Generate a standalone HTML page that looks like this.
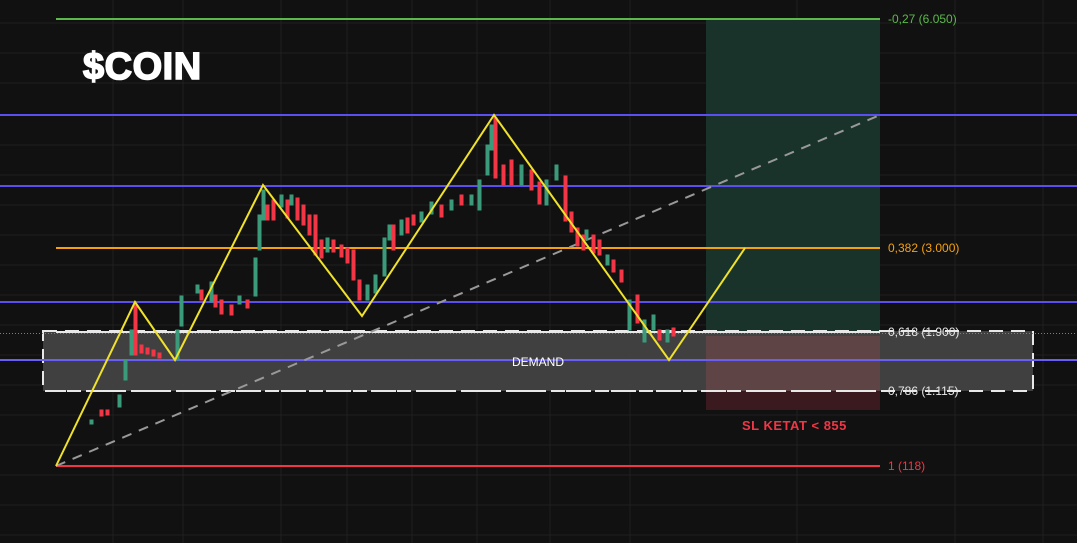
<!DOCTYPE html>
<html><head><meta charset="utf-8"><style>
html,body{margin:0;padding:0;background:#111111;}
svg{display:block}
text{font-family:"Liberation Sans",sans-serif;}
</style></head><body>
<svg width="1077" height="543" viewBox="0 0 1077 543" xmlns="http://www.w3.org/2000/svg">
<rect width="1077" height="543" fill="#111111"/>
<g stroke="#1f1f1f" stroke-width="1">
<line x1="0" y1="23" x2="1077" y2="23"/><line x1="0" y1="53" x2="1077" y2="53"/><line x1="0" y1="83" x2="1077" y2="83"/>
<line x1="0" y1="145" x2="1077" y2="145"/><line x1="0" y1="175" x2="1077" y2="175"/><line x1="0" y1="205" x2="1077" y2="205"/>
<line x1="0" y1="235" x2="1077" y2="235"/><line x1="0" y1="265" x2="1077" y2="265"/><line x1="0" y1="295" x2="1077" y2="295"/>
<line x1="0" y1="325" x2="1077" y2="325"/><line x1="0" y1="355" x2="1077" y2="355"/><line x1="0" y1="385" x2="1077" y2="385"/>
<line x1="0" y1="415" x2="1077" y2="415"/><line x1="0" y1="445" x2="1077" y2="445"/><line x1="0" y1="475" x2="1077" y2="475"/>
<line x1="0" y1="505" x2="1077" y2="505"/><line x1="0" y1="535" x2="1077" y2="535"/>
<line x1="113" y1="0" x2="113" y2="543"/><line x1="183" y1="0" x2="183" y2="543"/><line x1="281" y1="0" x2="281" y2="543"/>
<line x1="347" y1="0" x2="347" y2="543"/><line x1="412" y1="0" x2="412" y2="543"/><line x1="477" y1="0" x2="477" y2="543"/>
<line x1="550" y1="0" x2="550" y2="543"/><line x1="630" y1="0" x2="630" y2="543"/><line x1="797" y1="0" x2="797" y2="543"/>
<line x1="955" y1="0" x2="955" y2="543"/><line x1="1043" y1="0" x2="1043" y2="543"/>
</g>
<rect x="706" y="19" width="174" height="317" fill="#19332b"/>
<rect x="706" y="336" width="174" height="74" fill="#3a1a1e"/>
<rect x="43" y="331" width="990" height="60" fill="#444444" fill-opacity="0.92"/>
<rect x="706" y="336" width="174" height="55" fill="#5e4444"/>
<rect x="43" y="331" width="990" height="60" fill="none" stroke="#e8e8e8" stroke-width="2" stroke-dasharray="14,8"/>
<line x1="0" y1="333.5" x2="1077" y2="333.5" stroke="#4a9a80" stroke-width="1" stroke-dasharray="1,2"/>
<line x1="56" y1="19" x2="880" y2="19" stroke="#5cb84a" stroke-width="2"/>
<line x1="0" y1="115" x2="1077" y2="115" stroke="#5b4ff0" stroke-width="2"/>
<line x1="0" y1="186" x2="1077" y2="186" stroke="#5b4ff0" stroke-width="2"/>
<line x1="56" y1="248" x2="880" y2="248" stroke="#f5a10f" stroke-width="2"/>
<line x1="0" y1="302" x2="1077" y2="302" stroke="#5b4ff0" stroke-width="2"/>
<line x1="0" y1="360" x2="1077" y2="360" stroke="#6a5ff5" stroke-width="2"/>
<line x1="56" y1="466" x2="880" y2="466" stroke="#f23645" stroke-width="2"/>
<line x1="56" y1="332" x2="880" y2="332" stroke="#e8e8e8" stroke-width="2"/>
<line x1="56" y1="391" x2="880" y2="391" stroke="#e8e8e8" stroke-width="2" stroke-dasharray="10,5"/>
<line x1="56" y1="466" x2="880" y2="115" stroke="#999" stroke-width="2" stroke-dasharray="10,8"/>
<g stroke-width="1">
<g fill="#3a9a7a" stroke="#3a9a7a">
<rect x="90" y="420" width="3" height="4"/><rect x="118" y="395" width="3" height="12"/><rect x="124" y="360" width="3" height="20"/>
<rect x="130" y="330" width="3" height="25"/><rect x="176" y="330" width="3" height="30"/><rect x="180" y="296" width="3" height="30"/>
<rect x="196" y="285" width="3" height="8"/><rect x="210" y="282" width="3" height="20"/><rect x="238" y="296" width="3" height="8"/>
<rect x="254" y="258" width="3" height="38"/><rect x="258" y="215" width="3" height="35"/><rect x="262" y="190" width="3" height="30"/>
<rect x="280" y="195" width="3" height="12"/><rect x="290" y="195" width="3" height="10"/><rect x="326" y="238" width="3" height="14"/>
<rect x="366" y="285" width="3" height="15"/><rect x="374" y="275" width="3" height="18"/><rect x="383" y="238" width="3" height="38"/>
<rect x="388" y="225" width="3" height="15"/><rect x="400" y="220" width="3" height="15"/><rect x="420" y="212" width="3" height="10"/>
<rect x="430" y="202" width="3" height="12"/><rect x="450" y="200" width="3" height="10"/><rect x="470" y="195" width="3" height="10"/>
<rect x="478" y="180" width="3" height="30"/><rect x="486" y="145" width="3" height="30"/><rect x="490" y="125" width="3" height="25"/>
<rect x="520" y="165" width="3" height="20"/><rect x="545" y="180" width="3" height="25"/><rect x="555" y="165" width="3" height="15"/>
<rect x="585" y="230" width="3" height="10"/><rect x="606" y="255" width="3" height="10"/><rect x="628" y="300" width="3" height="30"/>
<rect x="643" y="320" width="3" height="22"/><rect x="652" y="315" width="3" height="15"/><rect x="666" y="330" width="3" height="12"/>
</g>
<g fill="#f23645" stroke="#f23645">
<rect x="100" y="410" width="3" height="6"/><rect x="106" y="410" width="3" height="5"/><rect x="134" y="305" width="3" height="50"/>
<rect x="140" y="345" width="3" height="8"/><rect x="146" y="348" width="3" height="6"/><rect x="152" y="350" width="3" height="6"/>
<rect x="158" y="353" width="3" height="5"/><rect x="200" y="290" width="3" height="10"/><rect x="214" y="295" width="3" height="12"/>
<rect x="220" y="300" width="3" height="14"/><rect x="230" y="305" width="3" height="10"/><rect x="246" y="300" width="3" height="8"/>
<rect x="266" y="205" width="3" height="15"/><rect x="272" y="200" width="3" height="20"/><rect x="286" y="200" width="3" height="18"/>
<rect x="296" y="198" width="3" height="22"/><rect x="302" y="205" width="3" height="20"/><rect x="308" y="215" width="3" height="20"/>
<rect x="314" y="215" width="3" height="40"/><rect x="320" y="240" width="3" height="18"/><rect x="332" y="240" width="3" height="12"/>
<rect x="340" y="245" width="3" height="12"/><rect x="346" y="248" width="3" height="15"/><rect x="352" y="250" width="3" height="30"/>
<rect x="358" y="280" width="3" height="20"/><rect x="392" y="225" width="3" height="25"/><rect x="406" y="218" width="3" height="15"/>
<rect x="412" y="215" width="3" height="10"/><rect x="440" y="205" width="3" height="12"/><rect x="460" y="195" width="3" height="10"/>
<rect x="494" y="118" width="3" height="60"/><rect x="502" y="165" width="3" height="20"/><rect x="510" y="160" width="3" height="25"/>
<rect x="530" y="170" width="3" height="20"/><rect x="538" y="182" width="3" height="22"/><rect x="564" y="176" width="3" height="45"/>
<rect x="570" y="212" width="3" height="20"/><rect x="576" y="228" width="3" height="18"/><rect x="582" y="235" width="3" height="15"/>
<rect x="592" y="235" width="3" height="18"/><rect x="598" y="240" width="3" height="15"/><rect x="612" y="260" width="3" height="12"/>
<rect x="620" y="270" width="3" height="12"/><rect x="636" y="295" width="3" height="28"/><rect x="658" y="330" width="3" height="10"/>
<rect x="672" y="328" width="3" height="8"/>
</g>
</g>
<polyline points="56,466 135,302 175,360 263,185 362,316 494,115 669,360 745,248" fill="none" stroke="#f0e12a" stroke-width="2"/>
<g font-size="12">
<text x="888" y="23" fill="#5cb84a">-0,27 (6.050)</text>
<text x="888" y="252" fill="#f5a10f">0,382 (3.000)</text>
<text x="888" y="336" fill="#e8e8e8">0,618 (1.900)</text>
<text x="888" y="395" fill="#e8e8e8">0,786 (1.115)</text>
<text x="888" y="470" fill="#f23645">1 (118)</text>
</g>
<text x="538" y="366" fill="#ffffff" font-size="12" text-anchor="middle">DEMAND</text>
<text x="742" y="430" fill="#f23645" font-size="13" font-weight="bold" letter-spacing="0.5">SL KETAT &lt; 855</text>
<text x="83" y="79" fill="#ffffff" stroke="#ffffff" stroke-width="1.6" font-size="38" font-weight="bold" letter-spacing="0.5">$COIN</text>
</svg>
</body></html>
